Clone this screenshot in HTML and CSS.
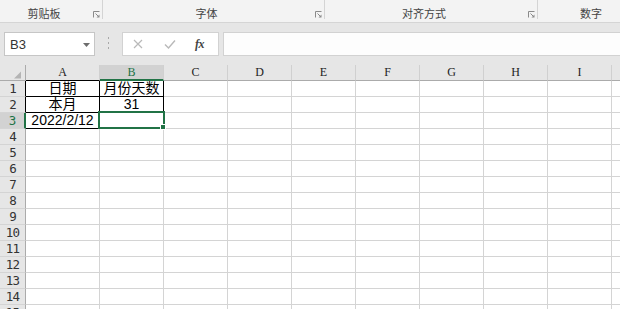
FILE: index.html
```html
<!DOCTYPE html>
<html lang="zh">
<head>
<meta charset="utf-8">
<title>Sheet</title>
<link rel="stylesheet" href="styles.css">
</head>
<body>
<div class="ribbon">
  <div class="grp g1"><span class="lbl">剪贴板</span><span class="launch"><svg width="7" height="7" viewBox="0 0 7 7"><path d="M0.5 6.5V0.5H6.5" fill="none" stroke="#8a8a8a"/><path d="M2.5 2.5L6 6" stroke="#8a8a8a"/><path d="M3.5 6.5H6.5V3.5Z" fill="#8a8a8a"/></svg></span></div>
  <div class="grp g2"><span class="lbl">字体</span><span class="launch"><svg width="7" height="7" viewBox="0 0 7 7"><path d="M0.5 6.5V0.5H6.5" fill="none" stroke="#8a8a8a"/><path d="M2.5 2.5L6 6" stroke="#8a8a8a"/><path d="M3.5 6.5H6.5V3.5Z" fill="#8a8a8a"/></svg></span></div>
  <div class="grp g3"><span class="lbl">对齐方式</span><span class="launch"><svg width="7" height="7" viewBox="0 0 7 7"><path d="M0.5 6.5V0.5H6.5" fill="none" stroke="#8a8a8a"/><path d="M2.5 2.5L6 6" stroke="#8a8a8a"/><path d="M3.5 6.5H6.5V3.5Z" fill="#8a8a8a"/></svg></span></div>
  <div class="grp g4"><span class="lbl">数字</span><span class="launch"></span></div>
</div>
<div class="fbar">
  <div class="namebox"><span class="ref">B3</span><svg class="dd" width="7" height="4" viewBox="0 0 7 4"><path d="M0 0H7L3.5 4Z" fill="#6d6d6d"/></svg></div>
  <div class="dots"><svg width="3" height="12" viewBox="0 0 3 12"><rect x="1" y="0" width="1" height="2" fill="#a8a8a8"/><rect x="1" y="5" width="1" height="2" fill="#a8a8a8"/><rect x="1" y="10" width="1" height="2" fill="#a8a8a8"/></svg></div>
  <div class="btns">
    <svg class="bx" width="10" height="10" viewBox="0 0 10 10"><path d="M1 1L9 9M9 1L1 9" stroke="#b9b9b9" stroke-width="1.2"/></svg>
    <svg class="bok" width="12" height="10" viewBox="0 0 12 10"><path d="M1 5.5L4.5 9L11 1.5" fill="none" stroke="#b9b9b9" stroke-width="1.4"/></svg>
    <span class="fx">fx</span>
  </div>
  <div class="finput"></div>
</div>
<div class="sheet">
  <div class="row hdr">
    <div class="corner"><svg width="25" height="15" viewBox="0 0 25 15"><path d="M21 6.5V13.5H14Z" fill="#b4b4b4"/></svg></div>
    <div class="ch a blk">A</div><div class="ch sel">B</div><div class="ch">C</div><div class="ch">D</div><div class="ch">E</div><div class="ch">F</div><div class="ch">G</div><div class="ch">H</div><div class="ch">I</div><div class="ch"></div>
  </div>
  <div class="row">
    <div class="rh blk">1</div><div class="c a bd">日期</div><div class="c bd">月份天数</div><div class="c"></div><div class="c"></div><div class="c"></div><div class="c"></div><div class="c"></div><div class="c"></div><div class="c"></div><div class="c"></div>
  </div>
  <div class="row">
    <div class="rh blk">2</div><div class="c a bd">本月</div><div class="c bd">31</div><div class="c"></div><div class="c"></div><div class="c"></div><div class="c"></div><div class="c"></div><div class="c"></div><div class="c"></div><div class="c"></div>
  </div>
  <div class="row">
    <div class="rh sel">3</div><div class="c a bd">2022/2/12</div><div class="c active"><div class="selbox"><div class="handle"></div></div></div><div class="c"></div><div class="c"></div><div class="c"></div><div class="c"></div><div class="c"></div><div class="c"></div><div class="c"></div><div class="c"></div>
  </div>
  <div class="row"><div class="rh">4</div><div class="c a"></div><div class="c"></div><div class="c"></div><div class="c"></div><div class="c"></div><div class="c"></div><div class="c"></div><div class="c"></div><div class="c"></div><div class="c"></div></div>
  <div class="row"><div class="rh">5</div><div class="c a"></div><div class="c"></div><div class="c"></div><div class="c"></div><div class="c"></div><div class="c"></div><div class="c"></div><div class="c"></div><div class="c"></div><div class="c"></div></div>
  <div class="row"><div class="rh">6</div><div class="c a"></div><div class="c"></div><div class="c"></div><div class="c"></div><div class="c"></div><div class="c"></div><div class="c"></div><div class="c"></div><div class="c"></div><div class="c"></div></div>
  <div class="row"><div class="rh">7</div><div class="c a"></div><div class="c"></div><div class="c"></div><div class="c"></div><div class="c"></div><div class="c"></div><div class="c"></div><div class="c"></div><div class="c"></div><div class="c"></div></div>
  <div class="row"><div class="rh">8</div><div class="c a"></div><div class="c"></div><div class="c"></div><div class="c"></div><div class="c"></div><div class="c"></div><div class="c"></div><div class="c"></div><div class="c"></div><div class="c"></div></div>
  <div class="row"><div class="rh">9</div><div class="c a"></div><div class="c"></div><div class="c"></div><div class="c"></div><div class="c"></div><div class="c"></div><div class="c"></div><div class="c"></div><div class="c"></div><div class="c"></div></div>
  <div class="row"><div class="rh">10</div><div class="c a"></div><div class="c"></div><div class="c"></div><div class="c"></div><div class="c"></div><div class="c"></div><div class="c"></div><div class="c"></div><div class="c"></div><div class="c"></div></div>
  <div class="row"><div class="rh">11</div><div class="c a"></div><div class="c"></div><div class="c"></div><div class="c"></div><div class="c"></div><div class="c"></div><div class="c"></div><div class="c"></div><div class="c"></div><div class="c"></div></div>
  <div class="row"><div class="rh">12</div><div class="c a"></div><div class="c"></div><div class="c"></div><div class="c"></div><div class="c"></div><div class="c"></div><div class="c"></div><div class="c"></div><div class="c"></div><div class="c"></div></div>
  <div class="row"><div class="rh">13</div><div class="c a"></div><div class="c"></div><div class="c"></div><div class="c"></div><div class="c"></div><div class="c"></div><div class="c"></div><div class="c"></div><div class="c"></div><div class="c"></div></div>
  <div class="row"><div class="rh">14</div><div class="c a"></div><div class="c"></div><div class="c"></div><div class="c"></div><div class="c"></div><div class="c"></div><div class="c"></div><div class="c"></div><div class="c"></div><div class="c"></div></div>
  <div class="row"><div class="rh">15</div><div class="c a"></div><div class="c"></div><div class="c"></div><div class="c"></div><div class="c"></div><div class="c"></div><div class="c"></div><div class="c"></div><div class="c"></div><div class="c"></div></div>
</div>
</body>
</html>
```
FILE: styles.css
```css
* { box-sizing: border-box; margin: 0; padding: 0; }
html, body { width: 620px; height: 309px; overflow: hidden; background: #fff; }
body { font-family: "Liberation Sans", "Noto Sans CJK SC", sans-serif; color: #000; }

.ribbon { height: 23px; background: #f3f3f3; border-bottom: 1px solid #d5d5d5; display: flex; align-items: flex-start; overflow: hidden; }
.grp { height: 19px; border-right: 1px solid #d4d4d4; display: flex; flex-shrink: 0; }
.g1 { width: 103px; }
.g2 { width: 222px; }
.g3 { width: 213px; }
.g4 { width: 120px; border-right: none; }
.lbl { flex: 1; text-align: center; font-family: "Noto Sans CJK SC", sans-serif; font-size: 11px; line-height: 14px; padding-top: 6px; color: #444; }
.launch { width: 14px; padding: 11px 0 0 5px; }
.launch svg { display: block; }

.fbar { height: 42px; background: #e6e6e6; display: flex; align-items: flex-start; padding: 9px 0 0 4px; }
.namebox { width: 91px; height: 24px; background: #fff; border: 1px solid #c6c6c6; display: flex; align-items: center; justify-content: space-between; padding: 0 4px 0 5px; }
.ref { font-size: 13px; color: #333; }
.dd { display: block; margin-top: 1px; }
.dots { width: 3px; margin-left: 12px; padding-top: 5px; }
.dots svg { display: block; }
.btns { width: 97px; height: 24px; margin-left: 12px; background: #fff; border: 1px solid #d2d2d2; display: flex; align-items: center; padding-left: 10px; }
.bx { display: block; }
.bok { display: block; margin-left: 21px; }
.fx { margin-left: 19px; font-family: "Liberation Serif", serif; font-style: italic; font-weight: bold; font-size: 12px; color: #444; letter-spacing: -0.5px; }
.finput { flex: 1; height: 24px; margin-left: 4px; background: #fdfdfd; border: 1px solid #d2d2d2; border-right: none; }

.sheet { display: flex; flex-direction: column; }
.row { display: flex; height: 16px; flex-shrink: 0; }
.row > div { height: 16px; flex-shrink: 0; }
.corner, .rh { width: 26px; }
.ch, .c { width: 64px; }
.a { width: 74px; }

.corner { background: #e6e6e6; border-right: 1px solid #ababab; border-bottom: 1px solid #ababab; }
.corner svg { display: block; }
.ch { background: #e6e6e6; border-right: 1px solid #d0d0d0; border-bottom: 1px solid #ababab; text-align: center; font-family: "Liberation Serif", serif; font-size: 12px; line-height: 15px; color: #222; }
.ch.blk { border-bottom-color: #000; }
.ch.sel { background: #d2d2d2; color: #217346; border-bottom: 2px solid #217346; }

.rh { background: #e6e6e6; border-right: 1px solid #ababab; border-bottom: 1px solid #d4d4d4; text-align: center; font-family: "DejaVu Sans Mono", monospace; font-size: 12.5px; letter-spacing: -0.8px; line-height: 15px; color: #333; }
.rh.blk { border-right-color: #000; }
.rh.sel { background: #d2d2d2; color: #217346; border-right: 2px solid #217346; }

.c { border-right: 1px solid #d4d4d4; border-bottom: 1px solid #d4d4d4; text-align: center; font-family: "Liberation Sans", "Noto Sans CJK SC", sans-serif; font-size: 14px; line-height: 15px; white-space: nowrap; }
.c.bd { border-right-color: #000; border-bottom-color: #000; }
.c.active { position: relative; }
.selbox { position: absolute; left: -2px; top: -2px; width: 67px; height: 18px; border: 2px solid #217346; }
.handle { position: absolute; right: -3px; bottom: -3px; width: 6px; height: 6px; background: #217346; border: 1px solid #fff; }
```
